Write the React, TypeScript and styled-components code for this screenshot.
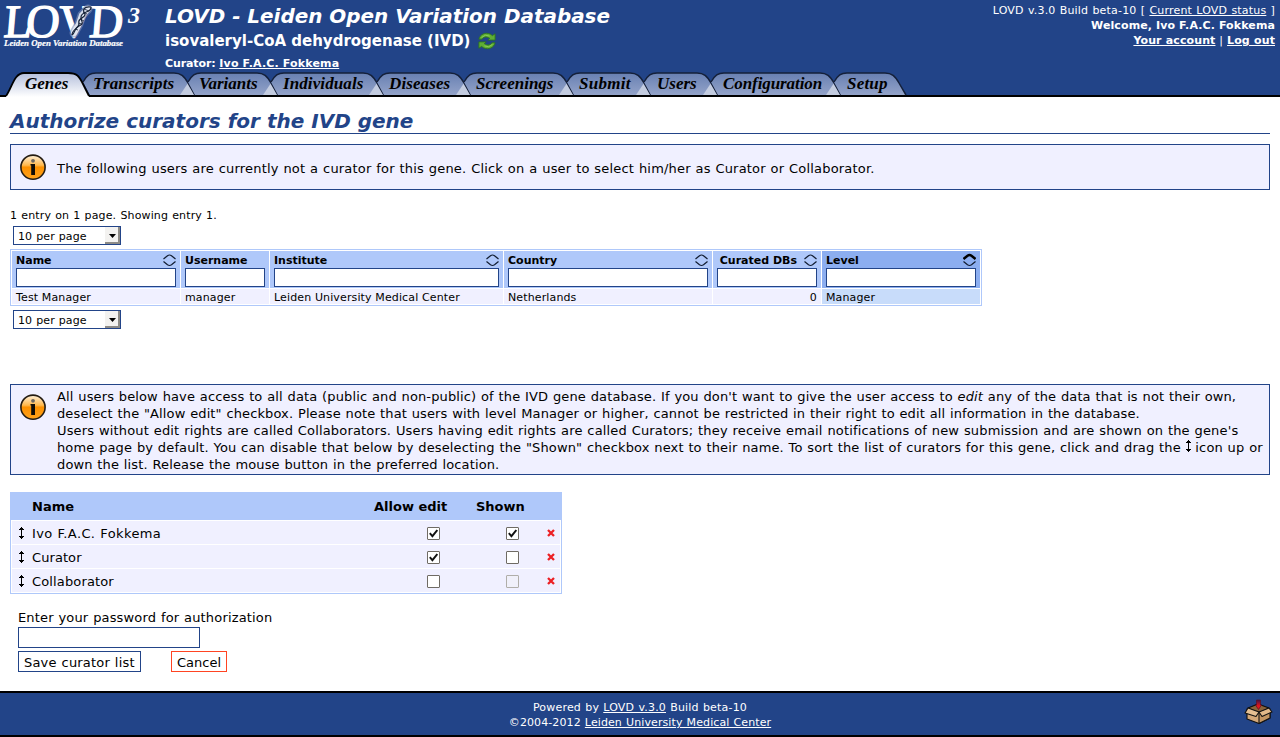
import React from "react";
import styled, { createGlobalStyle } from "styled-components";

const BLUE = "#224488";

const Global = createGlobalStyle`
  * { box-sizing: border-box; }
  body { margin: 0; background: #fff; color: #000; font: 13px/17px Verdana, "DejaVu Sans", sans-serif; }
`;

const Page = styled.div`
  display: flex;
  flex-direction: column;
  height: 737px;
  overflow: hidden;
`;

const Header = styled.header`
  display: flex;
  flex-direction: column;
  height: 97px;
  background: ${BLUE};
  color: #fff;
`;

const HeaderTop = styled.div`
  display: flex;
  height: 72px;
`;

const LogoBox = styled.div`
  width: 165px;
`;

const Titles = styled.div`
  display: flex;
  flex-direction: column;
  flex: 1;
  white-space: nowrap;
`;

const AppTitle = styled.h1`
  margin: 4px 0 1px;
  font-size: 19.95px;
  line-height: 24px;
  font-style: italic;
  font-weight: bold;
`;

const GeneTitle = styled.div`
  display: flex;
  align-items: center;
  gap: 8px;
  height: 24px;
  font-size: 15px;
  font-weight: bold;
`;

const CuratorLine = styled.div`
  margin-top: 3px;
  font-size: 11px;
  line-height: 16px;
  font-weight: bold;
`;

const Status = styled.div`
  padding: 3px 5px 0 0;
  font-size: 11px;
  line-height: 15px;
  text-align: right;
  white-space: nowrap;
`;

const Link = styled.a`
  color: inherit;
  text-decoration: underline;
`;

const TabBar = styled.nav`
  display: flex;
  height: 25px;
  padding-left: 5px;
  border-bottom: 2px solid #000;
`;

const TabItem = styled.div<{ $width: number; $active?: boolean }>`
  position: relative;
  width: ${(p) => p.$width}px;
  height: ${(p) => (p.$active ? 25 : 23)}px;
  z-index: ${(p) => (p.$active ? 2 : 1)};
  color: #000;
`;

const TabShape = styled.svg`
  position: absolute;
  left: 0;
  top: 0;
  overflow: visible;
`;

const TabLabel = styled.span<{ $pad: number; $track?: number }>`
  position: relative;
  display: block;
  padding-left: ${(p) => p.$pad}px;
  font: italic bold 17px/23px "Liberation Serif", serif;
  letter-spacing: ${(p) => p.$track ?? 0}px;
  white-space: nowrap;
`;

const Main = styled.main`
  display: flex;
  flex-direction: column;
  align-items: flex-start;
  flex: 1;
  padding: 0 10px;
`;

const PageTitle = styled.h2`
  width: 100%;
  height: 25px;
  margin: 12px 0 10px;
  border-bottom: 1px solid ${BLUE};
  color: ${BLUE};
  font-size: 20px;
  line-height: 25px;
  font-style: italic;
`;

const InfoBox = styled.section<{ $height: number; $top?: number }>`
  display: flex;
  width: 100%;
  height: ${(p) => p.$height}px;
  margin-top: ${(p) => p.$top ?? 0}px;
  padding: 9px 0 0 9px;
  border: 1px solid ${BLUE};
  background: #f0f0ff;
`;

const InfoText = styled.div<{ $shift: number }>`
  margin: ${(p) => p.$shift}px 0 0 11px;
  white-space: nowrap;
`;

const Line = styled.div<{ $track?: number }>`
  height: 17px;
  letter-spacing: ${(p) => p.$track ?? 0}px;
  word-spacing: 0.5px;
`;

const Paging = styled.div`
  height: 15px;
  margin-top: 17px;
  font-size: 11px;
  line-height: 17px;
  letter-spacing: 0.14px;
  word-spacing: 0.5px;
`;

const PageSelect = styled.div`
  display: flex;
  justify-content: space-between;
  width: 108px;
  height: 19px;
  margin: 4px 3px;
  padding: 0 0 0 4px;
  border: 1px solid ${BLUE};
  font-size: 11px;
  line-height: 19px;
  letter-spacing: 0.1px;
  word-spacing: 0.4px;
`;

const SelectArrow = styled.span`
  display: flex;
  align-items: center;
  justify-content: center;
  width: 15px;
  height: 17px;
  padding: 2px 0 0 1px;
  border-right: 2px solid #8d8b87;
  border-bottom: 2px solid #8d8b87;
  background: #f3f2f0;
`;

const Grid = styled.div`
  display: grid;
  grid-template-columns: 168px 88px 233px 208px 108px 158px;
  grid-template-rows: 37px 15px;
  gap: 1px;
  padding: 1px;
  border: 1px solid #afc8fa;
  font-size: 11px;
`;

const HeadCell = styled.div<{ $sorted?: boolean }>`
  display: flex;
  flex-direction: column;
  padding: 2px 4px 0;
  background: ${(p) => (p.$sorted ? "#8caef0" : "#afc8fa")};
  font-weight: bold;
`;

const HeadLabel = styled.div<{ $right?: boolean }>`
  display: flex;
  justify-content: ${(p) => (p.$right ? "flex-end" : "space-between")};
  gap: 7px;
  height: 15px;
  line-height: 15px;
  white-space: nowrap;
`;

const Filter = styled.div`
  height: 19px;
  border: 1px solid ${BLUE};
  background: #fff;
`;

const Cell = styled.div<{ $sorted?: boolean; $right?: boolean }>`
  padding: 0 4px;
  background: ${(p) => (p.$sorted ? "#c8dcfa" : "#f0f0ff")};
  line-height: 17px;
  letter-spacing: 0.13px;
  text-align: ${(p) => (p.$right ? "right" : "left")};
`;

const CuratorTable = styled.div`
  width: 552px;
  margin-top: 17px;
  border: 1px solid #afc8fa;
  border-top: 0;
`;

const CuratorHead = styled.div`
  display: grid;
  grid-template-columns: 21px 342px 102px 1fr;
  height: 28px;
  background: #afc8fa;
  font-weight: bold;
  line-height: 29px;
`;

const CuratorRow = styled.div`
  display: grid;
  grid-template-columns: 20px 395px 79px 41px 1fr;
  align-items: center;
  height: 23px;
  margin: 1px;
  background: #f0f0ff;
`;

const CuratorName = styled.span<{ $track: number }>`
  padding-top: 2px;
  letter-spacing: ${(p) => p.$track}px;
  word-spacing: 0.5px;
`;

const Handle = styled.span`
  display: flex;
  padding-left: 7px;
`;

const Check = styled.span<{ $muted?: boolean }>`
  display: flex;
  align-items: center;
  justify-content: center;
  width: 13px;
  height: 13px;
  margin-top: 1px;
  border: 1px solid ${(p) => (p.$muted ? "#b0aea9" : "#6f6b64")};
  border-radius: 1px;
  background: ${(p) => (p.$muted ? "#f0f0fa" : "#fff")};
`;

const Form = styled.form`
  display: flex;
  flex-direction: column;
  margin: 15px 8px 0;
`;

const Password = styled.div`
  width: 182px;
  height: 21px;
  margin: 1px 0 3px;
  border: 1px solid ${BLUE};
`;

const Buttons = styled.div`
  display: flex;
  gap: 30px;
`;

const Button = styled.div<{ $width: number; $cancel?: boolean }>`
  width: ${(p) => p.$width}px;
  height: 21px;
  padding-left: 5px;
  border: 1px solid ${(p) => (p.$cancel ? "#ff4422" : BLUE)};
  line-height: 21px;
  letter-spacing: ${(p) => (p.$cancel ? 0 : 0.2)}px;
  word-spacing: ${(p) => (p.$cancel ? 0 : 0.5)}px;
  white-space: nowrap;
`;

const Footer = styled.footer`
  position: relative;
  height: 46px;
  padding-top: 7px;
  border-top: 2px solid #000;
  border-bottom: 2px solid #000;
  background: ${BLUE};
  color: #fff;
  font-size: 11px;
  line-height: 15px;
  text-align: center;
`;

const FooterIcon = styled.div`
  position: absolute;
  right: 7px;
  top: 5px;
`;

const T = styled.span<{ $track: number; $word?: number }>`
  letter-spacing: ${(p) => p.$track}px;
  word-spacing: ${(p) => p.$word ?? 0}px;
`;

const DragMark = styled.svg`
  display: inline-block;
  vertical-align: 0;
`;

const Logo = () => (
  <svg width="150" height="52" viewBox="0 0 150 52" overflow="visible">
    <g fill="#fff" fontFamily="Liberation Serif, serif">
      <text transform="translate(0 37) skewX(-5)" x="3 25 57 88.500" y="0" fontSize="46.500" stroke="#fff" strokeWidth="1.3">LOVD</text>
      <text x="128" y="23" fontSize="24" fontWeight="bold" fontStyle="italic">3</text>
      <text x="4" y="45.500" fontSize="8.500" fontWeight="bold" fontStyle="italic" textLength="119" lengthAdjust="spacingAndGlyphs" stroke="#fff" strokeWidth=".2">
        Leiden Open Variation Database
      </text>
    </g>
    <g fill="none" strokeLinecap="round">
      <path d="M88 9L82 15L79 24L74 33" stroke="#7d90bb" strokeWidth="9" strokeOpacity=".6" />
      <path d="M88 9L82 15L79 24L74 33" stroke="#e4e9f3" strokeWidth="6" strokeOpacity=".9" />
    </g>
    <g stroke="#172238" fill="none" strokeWidth="1.2">
      <path d="M91 7C84 6 82 10 85 14C86 18 77 18 79 23C80 28 72 29 72 35" />
      <path d="M91 7C92 13 81 11 81 17C81 22 85 23 79 26C74 28 76 32 72 35" />
      <path d="M84 9l5 2M83 12l4 2M80 19l4 2M78 23l4 1M75 29l3 1" strokeWidth=".8" />
    </g>
  </svg>
);

const Refresh = () => (
  <svg width="18" height="18" viewBox="0 0 20 20">
    <g fill="#5fae35" stroke="#2c7420" strokeWidth="1" strokeLinejoin="round">
      <path d="M1 8C2 3 8 -.5 14 2.500L16 4L19 2V9H11L13 7C9 4.500 6 5.500 4.500 8Z" />
      <path d="M19 12C18 17 12 20.500 6 17.500L4 16L1 18V11H9L7 13C11 15.500 14 14.500 15.500 12Z" />
    </g>
    <path d="M4 6Q8 2 13 4.500M16 14Q12 18 7 15.500" stroke="#8fd058" fill="none" />
  </svg>
);

const InfoIcon = () => (
  <svg width="26" height="27" viewBox="0 0 26 27">
    <defs>
      <linearGradient id="orb" x1="0" y1="0" x2="0" y2="1">
        <stop offset="0" stopColor="#fff2dc" />
        <stop offset=".42" stopColor="#ffb84c" />
        <stop offset=".5" stopColor="#fc9000" />
        <stop offset="1" stopColor="#ffa31c" />
      </linearGradient>
    </defs>
    <circle cx="13" cy="13.200" r="12.100" fill="url(#orb)" stroke="#241c12" strokeWidth="1.6" />
    <circle cx="13" cy="6.800" r="1.900" fill="#6d6861" />
    <path d="M10.500 10H15V21H11.200V11.500H10.500Z" fill="#100c06" />
  </svg>
);

const Sort = ({ up }: { up?: boolean }) => (
  <svg width="13" height="14" viewBox="0 -1 13 14" fill="none" stroke="#111c30">
    <path d="M.5 5L4.500 1.700Q6.500 .3 8.500 1.700L12.500 5" strokeWidth={up ? 2.4 : 1.2} stroke={up ? "#000" : undefined} />
    <path d="M.5 7.500L4.500 10.800Q6.500 12.200 8.500 10.800L12.500 7.500" strokeWidth="1.2" />
  </svg>
);

const Drag = () => (
  <DragMark width="5" height="12" viewBox="0 0 5 12" shapeRendering="crispEdges">
    <path d="M2 0h1v1h1v1h1v1H3v6h2v1H4v1H3v1H2v-1H1v-1H0v-1h2V3H0V2h1V1h1z" />
  </DragMark>
);

const Remove = () => (
  <svg width="8" height="8" viewBox="0 0 8 8">
    <path d="M1 1L7 7M7 1L1 7" stroke="#ec2024" strokeWidth="2.3" />
  </svg>
);

const Tick = () => (
  <svg width="9" height="9" viewBox="0 0 9 9">
    <path d="M.8 4.200L3.400 7.200L8.300 1" stroke="#111" strokeWidth="1.9" fill="none" />
  </svg>
);

const Box = () => (
  <svg width="29" height="27" viewBox="0 0 29 27" stroke="#111" strokeWidth="1.1" strokeLinejoin="round">
    <defs>
      <linearGradient id="drop" x1="0" y1="0" x2="0" y2="1">
        <stop offset="0" stopColor="#3c1448" />
        <stop offset=".6" stopColor="#e0141c" />
      </linearGradient>
    </defs>
    <path d="M3 11L14 6L26 11V20L15 25.500L3 21Z" fill="#d4a878" />
    <path d="M4 10L14 6L25 10L15 15Z" fill="#8a6238" />
    <path d="M15 14V25.500L26 20V12Z" fill="#c39562" />
    <path d="M4 10L15 14L12 18.500L1 15Z" fill="#e6c093" />
    <path d="M15 14L25 10L28 14L18 18.500Z" fill="#e2b989" />
    <path d="M12.500 2H16.500V7H17.500L14.500 11.500L11.500 7H12.500Z" fill="url(#drop)" stroke="#5c1024" strokeWidth=".7" />
  </svg>
);

const tabs: { label: string; width: number; pad: number; track?: number }[] = [
  { label: "Genes", width: 78, pad: 20 },
  { label: "Transcripts", width: 105, pad: 10, track: 0.15 },
  { label: "Variants", width: 83, pad: 11 },
  { label: "Individuals", width: 106, pad: 12, track: 0.1 },
  { label: "Diseases", width: 87, pad: 12, track: 0.1 },
  { label: "Screenings", width: 103, pad: 12 },
  { label: "Submit", width: 77, pad: 12, track: 0.3 },
  { label: "Users", width: 67, pad: 13 },
  { label: "Configuration", width: 123, pad: 12, track: -0.08 },
  { label: "Setup", width: 65, pad: 13, track: 0.2 },
];

const Tab = ({ index }: { index: number }) => {
  const { label, width: w, pad, track } = tabs[index];
  const active = index === 0;
  const last = index === tabs.length - 1;
  const arc = active
    ? `M1 24C7 16 9 1 19 1H${w - 15}C${w - 6} 1 ${w - 4} 4 ${w} 12L${w + 6} 24`
    : `M0 10C4 3 7 1 13 1H${w - 14}C${w - 7} 1 ${w - 4} 4 ${w} 11L${w + 7} 23`;
  return (
    <TabItem $width={w} $active={active}>
      <TabShape width={w} height={25}>
        <defs>
          <linearGradient id={`tab${index}`} x1="0" y1="0" x2="0" y2="1">
            <stop offset="0" stopColor={active ? "#b4bfdb" : "#6880b2"} />
            <stop offset="1" stopColor={active ? "#ffffff" : "#93a3c9"} />
          </linearGradient>
        </defs>
        <path d={active ? `${arc}V25H1Z` : `${arc}H7Z`} fill={`url(#tab${index})`} />
        {!last && !active && <path d={`M${w} 11L${w - 8} 23H${w + 7}Z`} fill="#c3cce0" />}
        <path d={arc} fill="none" stroke={active ? "#000" : "#14203a"} strokeWidth={active ? 1.8 : 1.5} />
      </TabShape>
      <TabLabel $pad={pad} $track={track}>{label}</TabLabel>
    </TabItem>
  );
};

const columns: { name: string; value: string; icon?: boolean; right?: boolean; sorted?: boolean }[] = [
  { name: "Name", value: "Test Manager", icon: true },
  { name: "Username", value: "manager" },
  { name: "Institute", value: "Leiden University Medical Center", icon: true },
  { name: "Country", value: "Netherlands", icon: true },
  { name: "Curated DBs", value: "0", icon: true, right: true },
  { name: "Level", value: "Manager", icon: true, sorted: true },
];

const curators = [
  { name: "Ivo F.A.C. Fokkema", edit: true, shown: true, track: 0.37 },
  { name: "Curator", edit: true, shown: false, track: 0.08 },
  { name: "Collaborator", edit: false, shown: false, muted: true, track: 0.14 },
];

const PerPage = () => (
  <PageSelect>
    10 per page
    <SelectArrow>
      <svg width="7" height="4" viewBox="0 0 7 4"><path d="M0 0H7L3.500 4Z" /></svg>
    </SelectArrow>
  </PageSelect>
);

export default function App() {
  return (
    <Page>
      <Global />
      <Header>
        <HeaderTop>
          <LogoBox><Logo /></LogoBox>
          <Titles>
            <AppTitle>LOVD - Leiden Open Variation Database</AppTitle>
            <GeneTitle>isovaleryl-CoA dehydrogenase (IVD)<Refresh /></GeneTitle>
            <CuratorLine><T $track={-0.1}>Curator: </T><Link><T $track={0.16}>Ivo F.A.C. Fokkema</T></Link></CuratorLine>
          </Titles>
          <Status>
            <div><T $track={0.19} $word={0.5}>LOVD v.3.0 Build beta-10 [ <Link>Current LOVD status</Link> ]</T></div>
            <b><T $track={0.11}>Welcome, Ivo F.A.C. Fokkema</T></b>
            <div><T $track={0.1} $word={0.3}><b><Link>Your account</Link></b> | <b><Link>Log out</Link></b></T></div>
          </Status>
        </HeaderTop>
        <TabBar>
          {tabs.map((t, i) => <Tab key={t.label} index={i} />)}
        </TabBar>
      </Header>
      <Main>
        <PageTitle>Authorize curators for the IVD gene</PageTitle>
        <InfoBox $height={46}>
          <InfoIcon />
          <InfoText $shift={6}>
            <Line $track={0.185}>The following users are currently not a curator for this gene. Click on a user to select him/her as Curator or Collaborator.</Line>
          </InfoText>
        </InfoBox>
        <Paging>1 entry on 1 page. Showing entry 1.</Paging>
        <PerPage />
        <Grid>
          {columns.map((c) => (
            <HeadCell key={c.name} $sorted={c.sorted}>
              <HeadLabel $right={c.right}>{c.name}{c.icon && <Sort up={c.sorted} />}</HeadLabel>
              <Filter />
            </HeadCell>
          ))}
          {columns.map((c) => (
            <Cell key={c.name} $sorted={c.sorted} $right={c.right}>{c.value}</Cell>
          ))}
        </Grid>
        <PerPage />
        <InfoBox $height={91} $top={51}>
          <InfoIcon />
          <InfoText $shift={-6}>
            <Line $track={0.128}>All users below have access to all data (public and non-public) of the IVD gene database. If you don't want to give the user access to <i>edit</i> any of the data that is not their own,</Line>
            <Line $track={0.118}>deselect the "Allow edit" checkbox. Please note that users with level Manager or higher, cannot be restricted in their right to edit all information in the database.</Line>
            <Line $track={0.159}>Users without edit rights are called Collaborators. Users having edit rights are called Curators; they receive email notifications of new submission and are shown on the gene's</Line>
            <Line $track={0.131}>home page by default. You can disable that below by deselecting the "Shown" checkbox next to their name. To sort the list of curators for this gene, click and drag the <Drag /> icon up or</Line>
            <Line $track={0.13}>down the list. Release the mouse button in the preferred location.</Line>
          </InfoText>
        </InfoBox>
        <CuratorTable>
          <CuratorHead>
            <span /><span>Name</span><span>Allow edit</span><span>Shown</span>
          </CuratorHead>
          {curators.map((c) => (
            <CuratorRow key={c.name}>
              <Handle><Drag /></Handle>
              <CuratorName $track={c.track}>{c.name}</CuratorName>
              <Check>{c.edit && <Tick />}</Check>
              <Check $muted={c.muted}>{c.shown && <Tick />}</Check>
              <Remove />
            </CuratorRow>
          ))}
        </CuratorTable>
        <Form>
          <Line $track={0.16}>Enter your password for authorization</Line>
          <Password />
          <Buttons>
            <Button $width={123}>Save curator list</Button>
            <Button $width={56} $cancel>Cancel</Button>
          </Buttons>
        </Form>
      </Main>
      <Footer>
        <div><T $track={0.19} $word={0.5}>Powered by <Link>LOVD v.3.0</Link> Build beta-10</T></div>
        <div><T $track={0.1} $word={0.5}>©2004-2012 <Link>Leiden University Medical Center</Link></T></div>
        <FooterIcon><Box /></FooterIcon>
      </Footer>
    </Page>
  );
}
